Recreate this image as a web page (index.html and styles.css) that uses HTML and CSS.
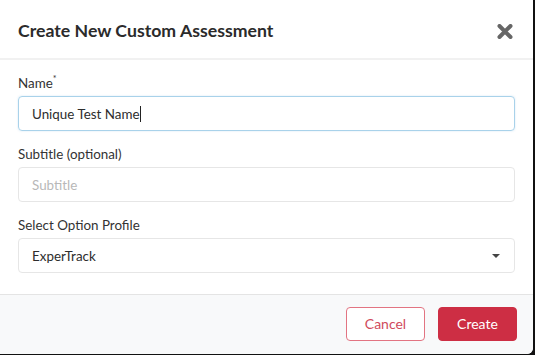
FILE: index.html
```html
<!DOCTYPE html>
<html lang="en">
<head>
  <meta charset="UTF-8">
  <title>Create New Custom Assessment</title>
  <link rel="stylesheet" href="styles.css">
</head>
<body>
  <div class="modal">
    <div class="modal-header">
      <h3>Create New Custom Assessment</h3>
      <button class="close-btn" aria-label="Close">
        <svg width="16" height="15" viewBox="0 0 16 15">
          <path d="M2.5 2 L13.5 13 M13.5 2 L2.5 13" stroke="#666" stroke-width="4" stroke-linecap="round"/>
        </svg>
      </button>
    </div>
    <form class="modal-body" autocomplete="off">
      <div class="field">
        <label>Name<sup>*</sup></label>
        <div class="control focused">Unique Test Name<span class="caret"></span></div>
      </div>
      <div class="field">
        <label>Subtitle (optional)</label>
        <div class="control placeholder">Subtitle</div>
      </div>
      <div class="field">
        <label>Select Option Profile</label>
        <div class="control select">ExperTrack<span class="arrow"></span></div>
      </div>
    </form>
    <div class="modal-footer">
      <button class="btn btn-outline">Cancel</button>
      <button class="btn btn-primary">Create</button>
    </div>
  </div>
</body>
</html>
```

FILE: styles.css
```css
body {
  margin: 0;
  background: #111;
  font-family: 'Lato', 'Noto Sans', sans-serif;
  width: 535px;
  height: 355px;
  overflow: hidden;
}
.modal {
  width: 533px;
  height: 354px;
  background: #fff;
  border-radius: 0 0 6px 0;
  display: flex;
  flex-direction: column;
  overflow: hidden;
}
.modal-header {
  display: flex;
  align-items: center;
  justify-content: space-between;
  height: 58px;
  padding: 0 20px 0 18px;
  border-bottom: 2px solid #f1f1f1;
}
.modal-header h3 {
  margin: 0;
  font-size: 17.7px;
  font-weight: 700;
  color: #2b2b2b;
  padding-top: 3px;
}
.close-btn {
  border: none;
  background: none;
  padding: 0;
  margin-top: 4px;
  display: flex;
}
.modal-body {
  padding: 15px 18px 0 18px;
  display: flex;
  flex-direction: column;
  gap: 15px;
  height: 219px;
  border-bottom: 1px solid #e4e4e4;
}
.field label {
  display: block;
  font-size: 13.4px;
  color: #333;
  margin-bottom: 4px;
  line-height: 17px;
}
.field label sup {
  font-size: 9px;
  vertical-align: 6px;
  line-height: 0;
}
.control {
  box-sizing: border-box;
  height: 35px;
  border: 1px solid #e6e6e6;
  border-radius: 4px;
  padding: 0 13px;
  display: flex;
  align-items: center;
  font-size: 13.4px;
  color: #2d2d2d;
}
.control.focused {
  border-color: #a9d2ea;
  box-shadow: 0 0 2px rgba(120, 180, 220, 0.35);
}
.caret {
  width: 1px;
  height: 16px;
  background: #222;
}
.control.placeholder {
  color: #b8b8b8;
}
.control.select {
  justify-content: space-between;
  padding-right: 14px;
}
.arrow {
  width: 0;
  height: 0;
  border-left: 4px solid transparent;
  border-right: 4px solid transparent;
  border-top: 4px solid #444;
}
.modal-footer {
  flex: 1;
  background: #f8f9fa;
  display: flex;
  justify-content: flex-end;
  align-items: center;
  gap: 13px;
  padding: 0 16px 2px 0;
}
.btn {
  box-sizing: border-box;
  width: 79px;
  height: 34px;
  border-radius: 4px;
  font-family: inherit;
  font-size: 14px;
  cursor: pointer;
}
.btn-outline {
  background: #fff;
  border: 1px solid #e27482;
  color: #d04a5c;
}
.btn-primary {
  background: #cd2e44;
  border: 1px solid #cd2e44;
  color: #fff;
}
```
